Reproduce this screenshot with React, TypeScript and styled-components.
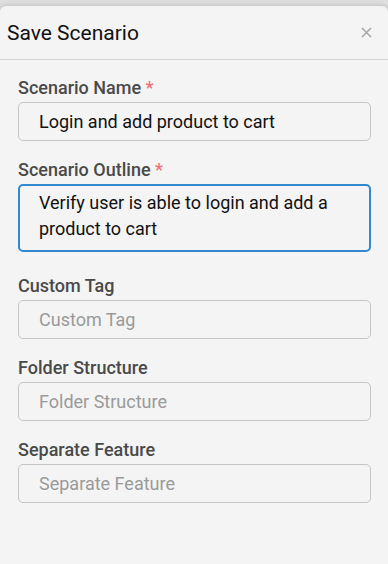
import styled, { createGlobalStyle } from 'styled-components';

const GlobalStyle = createGlobalStyle`
  html, body {
    margin: 0;
    padding: 0;
    height: 100%;
    background: #dedede;
    font-family: Roboto, 'Liberation Sans', sans-serif;
  }
  #root {
    height: 100%;
  }
`;

const fields = [
  { label: 'Scenario Name', required: true, value: 'Login and add product to cart', placeholder: '' },
  { label: 'Custom Tag', required: false, value: '', placeholder: 'Custom Tag' },
  { label: 'Folder Structure', required: false, value: '', placeholder: 'Folder Structure' },
  { label: 'Separate Feature', required: false, value: '', placeholder: 'Separate Feature' },
];

const App = () => {
  const [name, ...rest] = fields;

  return (
    <>
      <GlobalStyle />
      <Page>
        <Panel>
          <Header>
            <Title>Save Scenario</Title>
            <CloseButton aria-label="close">
              <svg width="11" height="11" viewBox="0 0 11 11">
                <path d="M1 1L10 10M10 1L1 10" stroke="#a8a8a8" strokeWidth="1.6" />
              </svg>
            </CloseButton>
          </Header>

          <Body>
            <Field>
              <Label>
                {name.label} <Star>*</Star>
              </Label>
              <Input defaultValue={name.value} />
            </Field>

            <Field>
              <Label>
                Scenario Outline <Star>*</Star>
              </Label>
              <OutlineBox>Verify user is able to login and add a product to cart</OutlineBox>
            </Field>

            {rest.map((item) => (
              <Field key={item.label}>
                <Label>{item.label}</Label>
                <Input placeholder={item.placeholder} />
              </Field>
            ))}
          </Body>
        </Panel>
      </Page>
    </>
  );
};

export default App;

const Page = styled.div`
  height: 100%;
  display: flex;
  flex-direction: column;
  padding-top: 6px;
  box-sizing: border-box;
`;

const Panel = styled.div`
  flex: 1;
  background: #f4f4f4;
  border-radius: 6px 6px 0 0;
  box-shadow: 0 -1px 4px rgba(0, 0, 0, 0.12);
  display: flex;
  flex-direction: column;
`;

const Header = styled.div`
  height: 53px;
  display: flex;
  align-items: center;
  justify-content: space-between;
  padding: 0 16px 0 7px;
  border-bottom: 1px solid #d6d6d6;
`;

const Title = styled.div`
  font-size: 21px;
  color: #111;
`;

const CloseButton = styled.button`
  background: none;
  border: none;
  padding: 0;
  display: flex;
  cursor: pointer;
`;

const Body = styled.div`
  display: flex;
  flex-direction: column;
  gap: 19px;
  padding: 18px 17px 0 18px;
`;

const Field = styled.div`
  display: flex;
  flex-direction: column;
  gap: 4px;
`;

const Label = styled.div`
  font-size: 18px;
  line-height: 20px;
  font-weight: 500;
  color: #4a4a4a;
`;

const Star = styled.span`
  color: #f07070;
`;

const Input = styled.input`
  height: 39px;
  box-sizing: border-box;
  border: 1px solid #c6c6c6;
  border-radius: 5px;
  background: #f4f4f4;
  padding: 0 20px;
  font-family: Roboto, 'Liberation Sans', sans-serif;
  font-size: 18px;
  color: #111;
  outline: none;

  &::placeholder {
    color: #9a9a9a;
  }
`;

const OutlineBox = styled.div`
  height: 68px;
  box-sizing: border-box;
  border: 2px solid #2f88d0;
  border-radius: 5px;
  padding: 4px 19px;
  font-size: 18px;
  line-height: 26px;
  color: #111;
  margin-bottom: 5px;
`;
